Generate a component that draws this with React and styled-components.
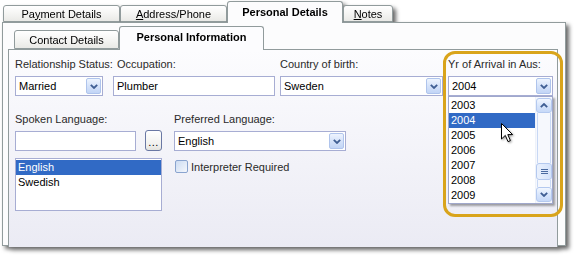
import React from "react";
import styled, { createGlobalStyle } from "styled-components";

const GlobalStyle = createGlobalStyle`
  body {
    margin: 0;
    background: #fff;
    font-family: "Liberation Sans", Arial, sans-serif;
    font-size: 11px;
    color: #000;
  }
`;

const Page = styled.div`
  width: 574px;
  height: 256px;
  padding-left: 2px;
  box-sizing: border-box;
  overflow: hidden;
`;

const Frame = styled.div`
  width: 564px;
  filter: drop-shadow(3px 3px 2px rgba(0, 0, 0, 0.6));
`;

const TabRow = styled.div`
  display: flex;
  align-items: flex-end;
  height: ${(p) => p.$h}px;
  padding-left: ${(p) => p.$pad}px;
  position: relative;
  z-index: 1;
`;

const Tab = styled.div`
  box-sizing: border-box;
  width: ${(p) => p.$w}px;
  height: ${(p) => (p.$active ? p.$h : p.$h - 5)}px;
  margin-bottom: ${(p) => (p.$active ? -1 : 0)}px;
  border: 1px solid #919b9c;
  border-bottom: ${(p) => (p.$active ? "none" : "1px solid #919b9c")};
  border-radius: 3px 3px 0 0;
  background: ${(p) =>
    p.$active ? p.$bg : "linear-gradient(#ffffff, #f3f3f1 60%, #e9e9e6)"};
  font-weight: ${(p) => (p.$active ? "bold" : "normal")};
  display: flex;
  align-items: ${(p) => (p.$active ? "flex-start" : "center")};
  padding-top: ${(p) => (p.$active ? 4 : 0)}px;
  justify-content: center;
  white-space: nowrap;
  color: #000;
`;

const OuterPanel = styled.div`
  box-sizing: border-box;
  height: 224px;
  border: 1px solid #919b9c;
  background: #fcfcfd;
  padding: 2px 7px 0 5px;
`;

const InnerPanel = styled.div`
  box-sizing: border-box;
  height: 198px;
  border: 1px solid #919b9c;
  border-bottom: none;
  background: linear-gradient(#fcfcfe, #ebebf4);
  padding: 7px 0 0 6px;
`;

const Row = styled.div`
  display: flex;
  align-items: flex-start;
  margin-top: ${(p) => p.$top || 0}px;
`;

const Field = styled.div`
  position: relative;
  display: flex;
  flex-direction: column;
  width: ${(p) => p.$w}px;
  margin-left: ${(p) => p.$left || 0}px;
`;

const Label = styled.div`
  height: 15px;
  line-height: 15px;
  margin-bottom: 4px;
  margin-left: ${(p) => p.$indent || 0}px;
  color: #2a2a2a;
  white-space: nowrap;
`;

const Box = styled.div`
  position: relative;
  box-sizing: border-box;
  width: ${(p) => p.$w}px;
  height: 20px;
  border: 1px solid #a7add3;
  background: #fff;
  display: flex;
  align-items: center;
  padding-left: 3px;
`;

const DropButton = styled.span`
  margin-left: auto;
  margin-right: 1px;
  width: 15px;
  height: 16px;
  box-sizing: border-box;
  border: 1px solid #afc4ec;
  border-radius: 2px;
  background: linear-gradient(#eef4fe, #d3e1f9 55%, #c2d5f6);
  display: flex;
  align-items: center;
  justify-content: center;
`;

const InlineRow = styled.div`
  display: flex;
  align-items: center;
`;

const DotsButton = styled.div`
  box-sizing: border-box;
  width: 17px;
  height: 21px;
  margin-left: 9px;
  margin-top: -1px;
  border: 1px solid #6a78a4;
  border-radius: 3px;
  background: linear-gradient(#ffffff, #f1f1ee 70%, #e3e3de);
  display: flex;
  align-items: flex-end;
  justify-content: center;
  padding-bottom: 4px;
  font-size: 11px;
  line-height: 8px;
  letter-spacing: 0.5px;
`;

const ListBox = styled.div`
  box-sizing: border-box;
  height: 53px;
  margin-top: 7px;
  border: 1px solid #a7add3;
  background: #fff;
  padding-top: 1px;
`;

const Item = styled.div`
  height: 15px;
  line-height: 15px;
  padding-left: 2px;
  background: ${(p) => (p.$sel ? "#316ac5" : "transparent")};
  color: ${(p) => (p.$sel ? "#fff" : "#000")};
`;

const CheckRow = styled.label`
  display: flex;
  align-items: center;
  margin-top: 9px;
  margin-left: 1px;
  gap: 3px;
  color: #2a2a2a;
`;

const CheckBox = styled.span`
  box-sizing: border-box;
  width: 13px;
  height: 13px;
  border: 1px solid #8aa4cf;
  border-radius: 2px;
  background: linear-gradient(135deg, #cddcf2, #f4f7fc);
`;

const Highlight = styled.div`
  position: absolute;
  left: -5px;
  top: -6px;
  width: 120px;
  height: 166px;
  box-sizing: border-box;
  border: 3px solid #d9a41b;
  border-radius: 12px;
  pointer-events: none;
`;

const Popup = styled.div`
  position: absolute;
  left: 0;
  top: 39px;
  width: 105px;
  height: 108px;
  box-sizing: border-box;
  border: 1px solid #a0a8cc;
  background: #fff;
  display: flex;
  box-shadow: 2px 2px 2px rgba(0, 0, 0, 0.35);
  z-index: 3;
`;

const PopupItems = styled.div`
  flex: 1;
  padding-top: 1px;
`;

const ScrollBar = styled.div`
  width: 17px;
  display: flex;
  flex-direction: column;
  background: #f6f8fd;
  border-left: 1px solid #eef2fa;
  padding: 1px 0;
  box-sizing: border-box;
`;

const ScrollButton = styled.div`
  box-sizing: border-box;
  height: 15px;
  border: 1px solid #b4c9ef;
  border-radius: 3px;
  background: linear-gradient(#f2f7ff, #d6e4fb 55%, #c7d9f8);
  display: flex;
  align-items: center;
  justify-content: center;
`;

const Track = styled.div`
  flex: ${(p) => (p.$fill ? 1 : "none")};
  height: ${(p) => (p.$fill ? "auto" : `${p.$h}px`)};
  margin: 0 1px;
  border-left: 1px solid #c8d8f4;
  border-right: 1px solid #c8d8f4;
`;

const Thumb = styled.div`
  box-sizing: border-box;
  height: 17px;
  border: 1px solid #b4c9ef;
  border-radius: 3px;
  background: linear-gradient(90deg, #eaf1fd, #d4e2fa);
  display: flex;
  align-items: center;
  justify-content: center;
`;

const Cursor = styled.svg`
  position: absolute;
  left: 52px;
  top: 26px;
  filter: drop-shadow(1px 1px 1px rgba(0, 0, 0, 0.4));
`;

const Chevron = ({ up }) => (
  <svg width="8" height="5" viewBox="0 0 8 5">
    <path
      d={up ? "M0.8 4.2 L4 1 L7.2 4.2" : "M0.8 0.8 L4 4 L7.2 0.8"}
      stroke="#3f5e93"
      strokeWidth="1.8"
      fill="none"
    />
  </svg>
);

const Grip = () => (
  <svg width="7" height="5" viewBox="0 0 7 5">
    <path d="M0 0.5 H7 M0 2.5 H7 M0 4.5 H7" stroke="#4a6aa0" strokeWidth="1" />
  </svg>
);

const Combo = ({ w, value }) => (
  <Box $w={w}>
    {value}
    <DropButton>
      <Chevron />
    </DropButton>
  </Box>
);

const years = ["2003", "2004", "2005", "2006", "2007", "2008", "2009"];

export default function App() {
  return (
    <Page>
      <GlobalStyle />
      <Frame>
        <TabRow $h={22} $pad={1}>
          <Tab $w={117} $h={22}>
            <span>
              Pa<u>y</u>ment Details
            </span>
          </Tab>
          <Tab $w={107} $h={22}>
            <span>
              <u>A</u>ddress/Phone
            </span>
          </Tab>
          <Tab $w={116} $h={22} $active $bg="#fcfcfd">
            Personal Details
          </Tab>
          <Tab $w={50} $h={22}>
            <span>
              <u>N</u>otes
            </span>
          </Tab>
        </TabRow>
        <OuterPanel>
          <TabRow $h={24} $pad={6}>
            <Tab $w={105} $h={24}>
              Contact Details
            </Tab>
            <Tab $w={145} $h={24} $active $bg="#fcfcfe">
              Personal Information
            </Tab>
          </TabRow>
          <InnerPanel>
            <Row>
              <Field $w={88}>
                <Label>Relationship Status:</Label>
                <Combo w={88} value="Married" />
              </Field>
              <Field $w={162} $left={10}>
                <Label $indent={4}>Occupation:</Label>
                <Box $w={162}>Plumber</Box>
              </Field>
              <Field $w={163} $left={5}>
                <Label>Country of birth:</Label>
                <Combo w={163} value="Sweden" />
              </Field>
              <Field $w={105} $left={5}>
                <Label>Yr of Arrival in Aus:</Label>
                <Combo w={105} value="2004" />
                <Popup>
                  <PopupItems>
                    {years.map((y) => (
                      <Item key={y} $sel={y === "2004"}>
                        {y}
                      </Item>
                    ))}
                  </PopupItems>
                  <ScrollBar>
                    <ScrollButton>
                      <Chevron up />
                    </ScrollButton>
                    <Track $fill />
                    <Thumb>
                      <Grip />
                    </Thumb>
                    <Track $h={7} />
                    <ScrollButton>
                      <Chevron />
                    </ScrollButton>
                  </ScrollBar>
                  <Cursor width="13" height="20" viewBox="0 0 13 20">
                    <path
                      d="M0.5 0.5 L0.5 16 L4.3 12.4 L7 18.6 L9.4 17.6 L6.8 11.6 L11.6 11.6 Z"
                      fill="#fff"
                      stroke="#000"
                      strokeWidth="1"
                    />
                  </Cursor>
                </Popup>
                <Highlight />
              </Field>
            </Row>
            <Row $top={16}>
              <Field $w={147}>
                <Label>Spoken Language:</Label>
                <InlineRow>
                  <Box $w={121} />
                  <DotsButton>...</DotsButton>
                </InlineRow>
                <ListBox>
                  <Item $sel>English</Item>
                  <Item>Swedish</Item>
                </ListBox>
              </Field>
              <Field $w={172} $left={12}>
                <Label>Preferred Language:</Label>
                <Combo w={172} value="English" />
                <CheckRow>
                  <CheckBox />
                  Interpreter Required
                </CheckRow>
              </Field>
            </Row>
          </InnerPanel>
        </OuterPanel>
      </Frame>
    </Page>
  );
}
